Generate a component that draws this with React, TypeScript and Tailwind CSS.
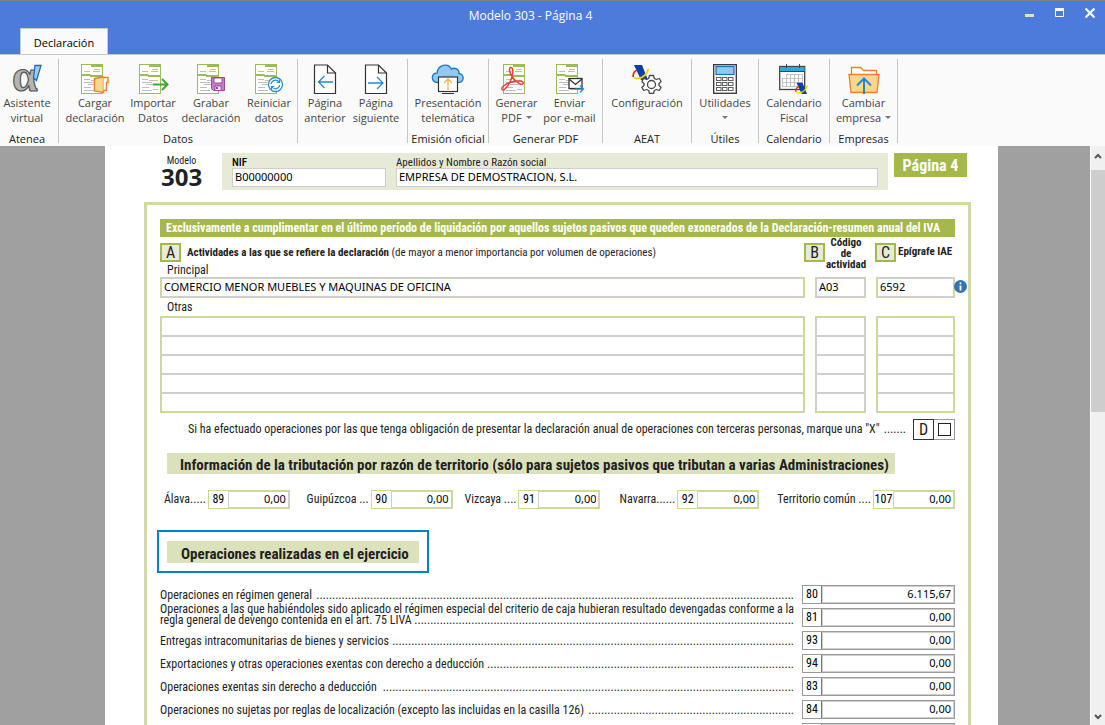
import React, { useState } from 'react';

const Alpha = () => (
  <svg width="32" height="30" viewBox="0 0 32 30" className="overflow-visible">
    <text x="1" y="27" fontSize="46" fontFamily="Liberation Serif, serif" fontWeight="bold" fill="#b4b4b4" stroke="#555" strokeWidth="1.2">α</text>
    <path d="M24 1.500h6L25.500 16.500l-3-2.500z" fill="#9cccf0" stroke="#1a6fb0" strokeWidth="1.300" />
  </svg>
);

const Sheet = ({ children }: { children?: React.ReactNode }) => (
  <svg width="32" height="30" viewBox="0 0 32 30">
    <rect x="2.500" y=".5" width="21" height="29" fill="#fff" stroke="#9bbb59" />
    <path d="M12 2h11M2.500 11h9M11 12h12" stroke="#9bbb59" strokeWidth="2" />
    <path d="M15 5.500h6M5 7.500h6M14 7.500h7M5 15.500h6M12 16.500h9M5 18.500h10M9 20.500h9M5 23.500h7M5 26.500h10M16 25.500h5" stroke="#bdbdbd" />
    {children}
  </svg>
);

const LoadIcon = () => (
  <Sheet>
    <path d="M15.500 14.500l9-1.500v15.500l-9-1.500z" fill="#f8d98c" stroke="#ed7d31" strokeWidth="1.400" />
    <path d="M24.500 13.500h4.500v5h-1.500v8h-3" fill="#fff" stroke="#ed7d31" strokeWidth="1.400" />
  </Sheet>
);

const ImportIcon = () => (
  <Sheet>
    <path d="M16 20.500h14M25 15l5.500 5.500-5.500 5.500" fill="none" stroke="#3fa535" strokeWidth="2" />
  </Sheet>
);

const SaveIcon = () => (
  <Sheet>
    <path d="M16.500 13.500h13v13h-11l-2-2z" fill="#c77ec9" stroke="#94489b" />
    <rect x="19" y="14" width="8" height="5" fill="#fff" stroke="#94489b" />
    <rect x="20" y="22" width="6" height="4.500" fill="#fff" stroke="#94489b" />
    <rect x="21" y="23" width="2" height="2" fill="#94489b" />
  </Sheet>
);

const ResetIcon = () => (
  <Sheet>
    <circle cx="22.500" cy="20.500" r="7" fill="#fff" stroke="#2e8fd0" strokeWidth="1.300" />
    <path d="M18.300 20c.4-4 5.500-5 7.700-2M26.500 15.500v3h-3M26.700 21c-.4 4-5.500 5-7.700 2M18.500 25.500v-3h3" fill="none" stroke="#2e8fd0" strokeWidth="1.200" />
  </Sheet>
);

const PageIcon = ({ next }: { next?: boolean }) => (
  <svg width="32" height="30" viewBox="0 0 32 30">
    <path d="M5.500 1h13l8 8v20.500h-21z" fill="#fff" stroke="#333" strokeWidth="1.200" />
    <path d="M18.500 1v8h8" fill="none" stroke="#333" strokeWidth="1.200" />
    {next
      ? <path d="M8 19h15M17 13l6 6-6 6" fill="none" stroke="#2488d0" strokeWidth="1.300" />
      : <path d="M24 18H9M15.500 12l-6 6 6 6" fill="none" stroke="#2488d0" strokeWidth="1.300" />}
  </svg>
);

const PrevIcon = () => <PageIcon />;
const NextIcon = () => <PageIcon next />;

const CloudIcon = () => (
  <svg width="34" height="30" viewBox="0 0 34 30">
    <path d="M6.500 18.500C-.5 17.500 0 9 6 9 7 .5 17-1.500 20.500 5c4-2 8 1 7.500 4.500 5.500.5 6 9-1.500 9z" fill="#91c9ef" stroke="#1f7cc4" strokeWidth="1.400" />
    <rect x="7.500" y="13" width="19" height="14.500" fill="#fff" stroke="#333" strokeWidth="1.200" />
    <path d="M11 29.500h12" stroke="#333" />
    <path d="M17 26V15.500M13 19l4-4 4 4" fill="none" stroke="#f5b642" strokeWidth="1.300" />
  </svg>
);

const PdfIcon = () => (
  <Sheet>
    <path d="M9.500 3.500c2.500-.5 3 3.500 1.500 9C9.500 18 6 23.500 3.500 25.500c-2.500 1.500-4-1-1-3.500 4.500-3.500 12-5.500 17-5 4.500.8 3 4.500-.5 3-4.500-2-9.500-8-10.500-13.500-.2-1.800 0-2.700 1-3z" fill="none" stroke="#ee3f3f" strokeWidth="1.500" />
  </Sheet>
);

const MailIcon = () => (
  <Sheet>
    <rect x="15" y="14.500" width="13" height="10" fill="#fff" stroke="#333" strokeWidth="1.300" />
    <path d="M15 15l6.500 5.500L28 15" fill="none" stroke="#333" strokeWidth="1.300" />
    <path d="M21 25h8M26 21.500l3.500 3.500-3.500 3.500" fill="none" stroke="#2488d0" strokeWidth="1.300" />
  </Sheet>
);

const AgencyMark = () => (
  <>
    <path d="M2 1h8l6 15H9z" fill="#0b3ea8" />
    <path d="M1 13c0-4 1.500-6 4-7" fill="none" stroke="#e42b2b" strokeWidth="1.800" />
    <path d="M1.500 13.500c6 3 13-1.500 15-9" fill="none" stroke="#fdd304" strokeWidth="1.800" />
  </>
);

const GearIcon = () => (
  <svg width="30" height="30" viewBox="0 0 30 30">
    <AgencyMark />
    <path d="M17.500 11.500h4l.8 3 2 1 3-1 1.800 3-2.200 2.200v1.600l2.200 2.200-1.800 3-3-1-2 1-.8 3h-4l-.8-3-2-1-3 1-1.800-3 2.200-2.200v-1.600l-2.200-2.200 1.800-3 3 1 2-1z" fill="#fff" stroke="#484848" strokeWidth="1.300" strokeLinejoin="round" />
    <circle cx="19.500" cy="20.500" r="4" fill="#fff" stroke="#484848" strokeWidth="1.300" />
  </svg>
);

const CalculatorIcon = () => (
  <svg width="24" height="30" viewBox="0 0 24 30">
    <rect x=".7" y=".7" width="22.600" height="28.600" fill="#fff" stroke="#333" strokeWidth="1.300" />
    <rect x="3" y="2.500" width="18" height="8" fill="#91c9ef" stroke="#1f6fb8" strokeWidth="1.200" />
    {[13.5, 18.5, 23.5].map(y => [3.5, 9.5, 15.5].map(x => (
      <rect key={`${x}-${y}`} x={x} y={y} width="4.500" height="3" fill="#fff" stroke="#606060" />
    )))}
  </svg>
);

const CalendarIcon = () => (
  <svg width="30" height="30" viewBox="0 0 30 30">
    <rect x=".7" y="2.500" width="25" height="23" fill="#fff" stroke="#444" strokeWidth="1.300" />
    <path d="M1 3h24.500v4H1z" fill="#31a5d8" />
    <path d="M1 7.500h24.500M7.500 0v4M20.500 0v4" stroke="#444" />
    <path d="M7 10.500h17M3 14.500h21M3 18.500h21M3 22.500h16M3.500 14v9M7.500 10v13M11.500 10v13M15.500 10v13M19.500 10v9M23.500 10v9" stroke="#c4c4c4" strokeWidth="1.200" />
    <g transform="translate(16 18) scale(.75)"><AgencyMark /></g>
  </svg>
);

const FolderIcon = () => (
  <svg width="32" height="30" viewBox="0 0 32 30">
    <path d="M3.500 10V3.500h9l3 3h13V10" fill="#fff" stroke="#ed7d31" strokeWidth="1.300" />
    <path d="M1 10.500h30l-2 18H3z" fill="#f8d98c" stroke="#ed7d31" strokeWidth="1.300" />
    <path d="M16 30V15M9 21.500l7-7 7 7" fill="none" stroke="#2488d0" strokeWidth="2" />
  </svg>
);

interface Action {
  icon: React.FC;
  lines: string[];
  width: string;
  menu?: boolean;
}

interface Group {
  title: string;
  width: string;
  actions: Action[];
}

const groups: Group[] = [
  { title: 'Atenea', width: 'w-[59px] pr-1', actions: [{ icon: Alpha, lines: ['Asistente', 'virtual'], width: 'w-[55px]' }] },
  {
    title: 'Datos',
    width: 'w-[239px]',
    actions: [
      { icon: LoadIcon, lines: ['Cargar', 'declaración'], width: 'ml-2 w-[58px]' },
      { icon: ImportIcon, lines: ['Importar', 'Datos'], width: 'w-[58px]' },
      { icon: SaveIcon, lines: ['Grabar', 'declaración'], width: 'w-[58px]' },
      { icon: ResetIcon, lines: ['Reiniciar', 'datos'], width: 'w-[58px]' },
    ],
  },
  {
    title: '',
    width: 'w-[110px] pr-1',
    actions: [
      { icon: PrevIcon, lines: ['Página', 'anterior'], width: 'w-[51px]' },
      { icon: NextIcon, lines: ['Página', 'siguiente'], width: 'w-[51px]' },
    ],
  },
  { title: 'Emisión oficial', width: 'w-[81px]', actions: [{ icon: CloudIcon, lines: ['Presentación', 'telemática'], width: 'w-[76px]' }] },
  {
    title: 'Generar PDF',
    width: 'w-[114px]',
    actions: [
      { icon: PdfIcon, lines: ['Generar', 'PDF'], width: 'w-[52px]', menu: true },
      { icon: MailIcon, lines: ['Enviar', 'por e-mail'], width: 'mr-1 w-[54px]' },
    ],
  },
  { title: 'AEAT', width: 'w-[89px]', actions: [{ icon: GearIcon, lines: ['Configuración'], width: 'w-[80px]' }] },
  { title: 'Útiles', width: 'w-[67px]', actions: [{ icon: CalculatorIcon, lines: ['Utilidades', ''], width: 'w-[60px]', menu: true }] },
  { title: 'Calendario', width: 'w-[71px]', actions: [{ icon: CalendarIcon, lines: ['Calendario', 'Fiscal'], width: 'w-[64px]' }] },
  { title: 'Empresas', width: 'w-[68px]', actions: [{ icon: FolderIcon, lines: ['Cambiar', 'empresa'], width: 'w-[60px]', menu: true }] },
];

const territories = [
  { name: 'Álava.....', code: '89', value: '0,00' },
  { name: 'Guipúzcoa ...', code: '90', value: '0,00' },
  { name: 'Vizcaya ....', code: '91', value: '0,00' },
  { name: 'Navarra......', code: '92', value: '0,00' },
  { name: 'Territorio común ....', code: '107', value: '0,00' },
];

const operations = [
  { text: 'Operaciones en régimen general', dots: 151, code: '80', value: '6.115,67' },
  {
    first: 'Operaciones a las que habiéndoles sido aplicado el régimen especial del criterio de caja hubieran resultado devengadas conforme a la',
    text: 'regla general de devengo contenida en el art. 75 LIVA',
    dots: 120,
    code: '81',
    value: '0,00',
  },
  { text: 'Entregas intracomunitarias de bienes y servicios', dots: 127, code: '93', value: '0,00' },
  { text: 'Exportaciones y otras operaciones exentas con derecho a deducción', dots: 97, code: '94', value: '0,00' },
  { text: 'Operaciones exentas sin derecho a deducción', dots: 130, code: '83', value: '0,00' },
  { text: 'Operaciones no sujetas por reglas de localización (excepto las incluidas en la casilla 126)', dots: 65, code: '84', value: '0,00' },
  { text: '', dots: 0, code: '', value: '' },
];

const field = "w-full min-w-0 bg-white border border-[#cfcfcf] px-0.5 pb-0.5 font-['Noto_Sans',sans-serif] text-[11px] text-black focus:outline-none";

const Letter = ({ children }: { children: string }) => (
  <span className="flex h-[19px] w-[21px] shrink-0 items-center justify-center border-2 border-[#a5b84b] bg-[#e7ead6] text-base leading-none">
    {children}
  </span>
);

const EmptyColumn = ({ label }: { label: string }) => (
  <div className="divide-y divide-[#cbd89a] border border-[#cbd89a]">
    {[1, 2, 3, 4, 5].map(n => (
      <input key={n} aria-label={`${label} ${n}`} className="block h-[19px] w-full min-w-0 border border-[#cfcfcf] bg-white px-1 text-[11px]" />
    ))}
  </div>
);

const Ribbon = () => (
  <nav className="flex h-[92px] shrink-0 border-t border-[#c8c8c8] bg-[#fafafa] pt-1">
    {groups.map((group, i) => (
      <section key={i} className={`flex h-[84px] shrink-0 flex-col border-r border-[#c6c6c6] ${group.width}`}>
        <div className="flex flex-1 justify-center">
          {group.actions.map(({ icon: Icon, lines, width, menu }) => (
            <button key={lines.join()} type="button" className={`flex shrink-0 flex-col items-center pt-[5px] text-[11px] leading-[15px] text-[#444] ${width}`}>
              <Icon />
              {lines.map((line, n) => (
                <span key={n} className="flex h-[15px] items-center gap-1 whitespace-nowrap first-of-type:mt-px">
                  {line}
                  {menu && n === lines.length - 1 && (
                    <svg width="6" height="3" viewBox="0 0 6 3"><path d="M0 0h6L3 3z" fill="#777" /></svg>
                  )}
                </span>
              ))}
            </button>
          ))}
        </div>
        <h2 className="-mb-[3px] h-[15px] whitespace-nowrap text-center text-[11px] leading-[15px] text-[#222]">{group.title}</h2>
      </section>
    ))}
  </nav>
);

const Scrollbar = () => (
  <div className="flex w-[15px] shrink-0 flex-col border-l border-white bg-[#f0f0f0]">
    <button type="button" aria-label="Subir" className="flex h-6 items-center justify-center pb-1">
      <svg width="8" height="6" viewBox="0 0 8 6"><path d="M1 5l3-3 3 3" fill="none" stroke="#555" strokeWidth="2" /></svg>
    </button>
    <div className="h-[242px] bg-[#cdcdcd]" />
    <button type="button" aria-label="Bajar" className="mt-auto flex h-4 items-center justify-center">
      <svg width="8" height="6" viewBox="0 0 8 6"><path d="M1 1l3 3 3-3" fill="none" stroke="#555" strokeWidth="2" /></svg>
    </button>
  </div>
);

export default function App() {
  const [thirdParty, setThirdParty] = useState(false);

  return (
    <div className="flex h-screen flex-col overflow-hidden font-['Open_Sans',sans-serif] text-[#222]">
      {/* Title bar */}
      <header className="flex h-[54px] shrink-0 flex-col border-t border-[#848484] bg-[#4c7bdb]">
        <div className="flex h-[29px] items-start">
          <h1 className="flex-1 pl-9 pt-[7px] text-center text-xs text-white">Modelo 303 - Página 4</h1>
          <div className="flex gap-5 pr-2.5 pt-[7px]">
            <button type="button" aria-label="Minimizar"><svg width="10" height="10"><path d="M0 7.500h9" stroke="#ddd" strokeWidth="3" /></svg></button>
            <button type="button" aria-label="Maximizar"><svg width="10" height="10"><path d="M.5 1v7.500h8V1" fill="none" stroke="#fff" /><path d="M0 1.500h9" stroke="#fff" strokeWidth="3" /></svg></button>
            <button type="button" aria-label="Cerrar"><svg width="10" height="10"><path d="M.5.5l9 9M9.500.5l-9 9" stroke="#fff" strokeWidth="2.200" /></svg></button>
          </div>
        </div>
        <button type="button" className="z-10 ml-5 h-[26px] w-[88px] shrink-0 border border-b-0 border-[#c8c8c8] bg-[#fafafa] pt-1 text-[11px] text-black">
          Declaración
        </button>
      </header>

      <Ribbon />

      <div className="flex min-h-0 flex-1 bg-[#a0a0a0]">
        <main className="ml-[105px] mr-[92px] min-w-0 flex-1 overflow-hidden bg-white pt-[7px] font-['Roboto_Condensed',sans-serif] text-xs leading-[13px]">
          {/* Form heading */}
          <div className="flex items-start pl-14 pr-[31px]">
            <div className="w-[41px] text-center">
              <p className="pt-0.5 text-[10px] leading-3">Modelo</p>
              <p className="font-['Open_Sans',sans-serif] text-2xl font-bold leading-5">303</p>
            </div>
            <div className="ml-5 flex h-[37px] flex-1 gap-2.5 bg-[#e7ead6] px-2.5 pt-1">
              <label className="w-[154px] text-[11px] leading-[11px]">
                <b className="font-medium text-black">NIF</b>
                <input defaultValue="B00000000" className={`block h-[19px] ${field}`} />
              </label>
              <label className="flex-1 text-[11px] leading-[11px]">
                Apellidos y Nombre o Razón social
                <input defaultValue="EMPRESA DE DEMOSTRACION, S.L." className={`block h-[19px] ${field}`} />
              </label>
            </div>
            <div className="ml-1.5 flex h-6 w-[73px] items-center justify-center bg-[#a5b84b] pt-0.5 text-base font-bold text-white">Página 4</div>
          </div>

          <section className="ml-[39px] mr-[27px] mt-3 min-h-full border-[3px] border-[#cfdaa5] px-[13px] pt-3.5">
            <h2 className="flex h-[18px] items-center whitespace-nowrap bg-[#a5b84b] pl-1.5 font-bold text-white">
              Exclusivamente a cumplimentar en el último período de liquidación por aquellos sujetos pasivos que queden exonerados de la Declaración-resumen anual del IVA
            </h2>

            <div className="flex h-10">
              <div className="flex-1 pt-1.5">
                <div className="flex items-center gap-1.5">
                  <Letter>A</Letter>
                  <p className="whitespace-nowrap text-[11px]"><b>Actividades a las que se refiere la declaración</b> (de mayor a menor importancia por volumen de operaciones)</p>
                </div>
                <p className="pl-[7px] pt-0.5">Principal</p>
              </div>
              <div className="flex w-[71px] items-start">
                <div className="pt-1.5"><Letter>B</Letter></div>
                <p className="flex-1 pr-2 text-center text-[11px] font-bold leading-[11px]">Código<br />de<br />actividad</p>
              </div>
              <div className="flex w-20 items-start gap-0.5 pt-1.5">
                <Letter>C</Letter>
                <p className="whitespace-nowrap pt-0.5 text-[11px] font-bold">Epígrafe IAE</p>
              </div>
            </div>

            <div className="grid grid-cols-[1fr_51px_79px] gap-x-2.5">
              <div className="border border-[#cbd89a]"><input aria-label="Principal" defaultValue="COMERCIO MENOR MUEBLES Y MAQUINAS DE OFICINA" className={`block h-[19px] ${field}`} /></div>
              <div className="border border-[#cbd89a]"><input aria-label="Código de actividad" defaultValue="A03" className={`block h-[19px] ${field}`} /></div>
              <div className="relative border border-[#cbd89a]">
                <input aria-label="Epígrafe IAE" defaultValue="6592" className={`block h-[19px] ${field}`} />
                <button type="button" aria-label="Información" className="absolute -right-[13px] top-0.5">
                  <svg width="13" height="13" viewBox="0 0 13 13">
                    <circle cx="6.500" cy="6.500" r="6.500" fill="#3572b0" />
                    <path d="M6.500 5.500v5M6.500 2.500v1.800" stroke="#fff" strokeWidth="1.800" />
                  </svg>
                </button>
              </div>
              <p className="col-span-3 h-[18px] pl-[7px] pt-[3px]">Otras</p>
              <EmptyColumn label="Otra actividad" />
              <EmptyColumn label="Código" />
              <EmptyColumn label="Epígrafe" />
            </div>

            <div className="mt-1.5 flex items-center pl-7">
              <label htmlFor="terceros" className="flex flex-1 justify-between whitespace-nowrap pr-[7px]">
                <span>Si ha efectuado operaciones por las que tenga obligación de presentar la declaración anual de operaciones con terceras personas, marque una "X"</span>
                <span>.......</span>
              </label>
              <span className="flex size-[21px] shrink-0 items-center justify-center border border-[#333] text-base">D</span>
              <span className="flex size-[21px] shrink-0 items-center justify-center border-y border-r border-[#999]">
                <input
                  id="terceros"
                  type="checkbox"
                  checked={thirdParty}
                  onChange={(e) => setThirdParty(e.target.checked)}
                  className="size-[13px] appearance-none border border-[#222] bg-white checked:bg-[#222]"
                />
              </span>
            </div>

            <h3 className="ml-[7px] mr-[60px] mt-[13px] flex h-[21px] items-center whitespace-nowrap bg-[#dae1bb] pl-[13px] pt-1 text-[15px] font-bold">
              Información de la tributación por razón de territorio (sólo para sujetos pasivos que tributan a varias Administraciones)
            </h3>

            <div className="mt-4 grid grid-cols-[48fr_82px_81fr_82px_66fr_82px_77fr_82px_114fr_82px] items-center">
              {territories.map(t => (
                <React.Fragment key={t.code}>
                  <label htmlFor={`casilla-${t.code}`} className="whitespace-nowrap pr-0.5 text-right">{t.name}</label>
                  <span className="flex h-[19px] border border-[#cbd89a]">
                    <span className="flex w-[19px] shrink-0 items-center justify-center text-black">{t.code}</span>
                    <input id={`casilla-${t.code}`} defaultValue={t.value} className={`text-right ${field}`} />
                  </span>
                </React.Fragment>
              ))}
            </div>

            <div className="-ml-[3px] mt-[21px] h-[43px] w-[272px] border-2 border-[#0082c8] px-2 pt-[9px]">
              <h3 className="flex h-[22px] items-center whitespace-nowrap bg-[#dae1bb] pl-3.5 pt-1 text-[15px] font-bold">Operaciones realizadas en el ejercicio</h3>
            </div>

            <div className="mt-3">
              {operations.map(op => (
                <label key={op.code} className="flex h-[23px] items-start">
                  <span className="min-w-0 flex-1 pr-2">
                    {op.first && <span className="-mt-1 block whitespace-nowrap leading-[11px]">{op.first}</span>}
                    <span className={op.first ? 'flex justify-between whitespace-nowrap leading-[11px]' : 'flex justify-between whitespace-nowrap pt-1'}>
                      <span>{op.text}</span>
                      <span>{'.'.repeat(op.dots)}</span>
                    </span>
                  </span>
                  <span className="flex h-[19px] w-[153px] shrink-0 border border-[#999]">
                    <span className="flex w-[19px] shrink-0 items-center justify-center border-r border-[#777] text-black">{op.code}</span>
                    <input defaultValue={op.value} className={`text-right ${field}`} />
                  </span>
                </label>
              ))}
            </div>
          </section>
        </main>
        <Scrollbar />
      </div>
    </div>
  );
}
